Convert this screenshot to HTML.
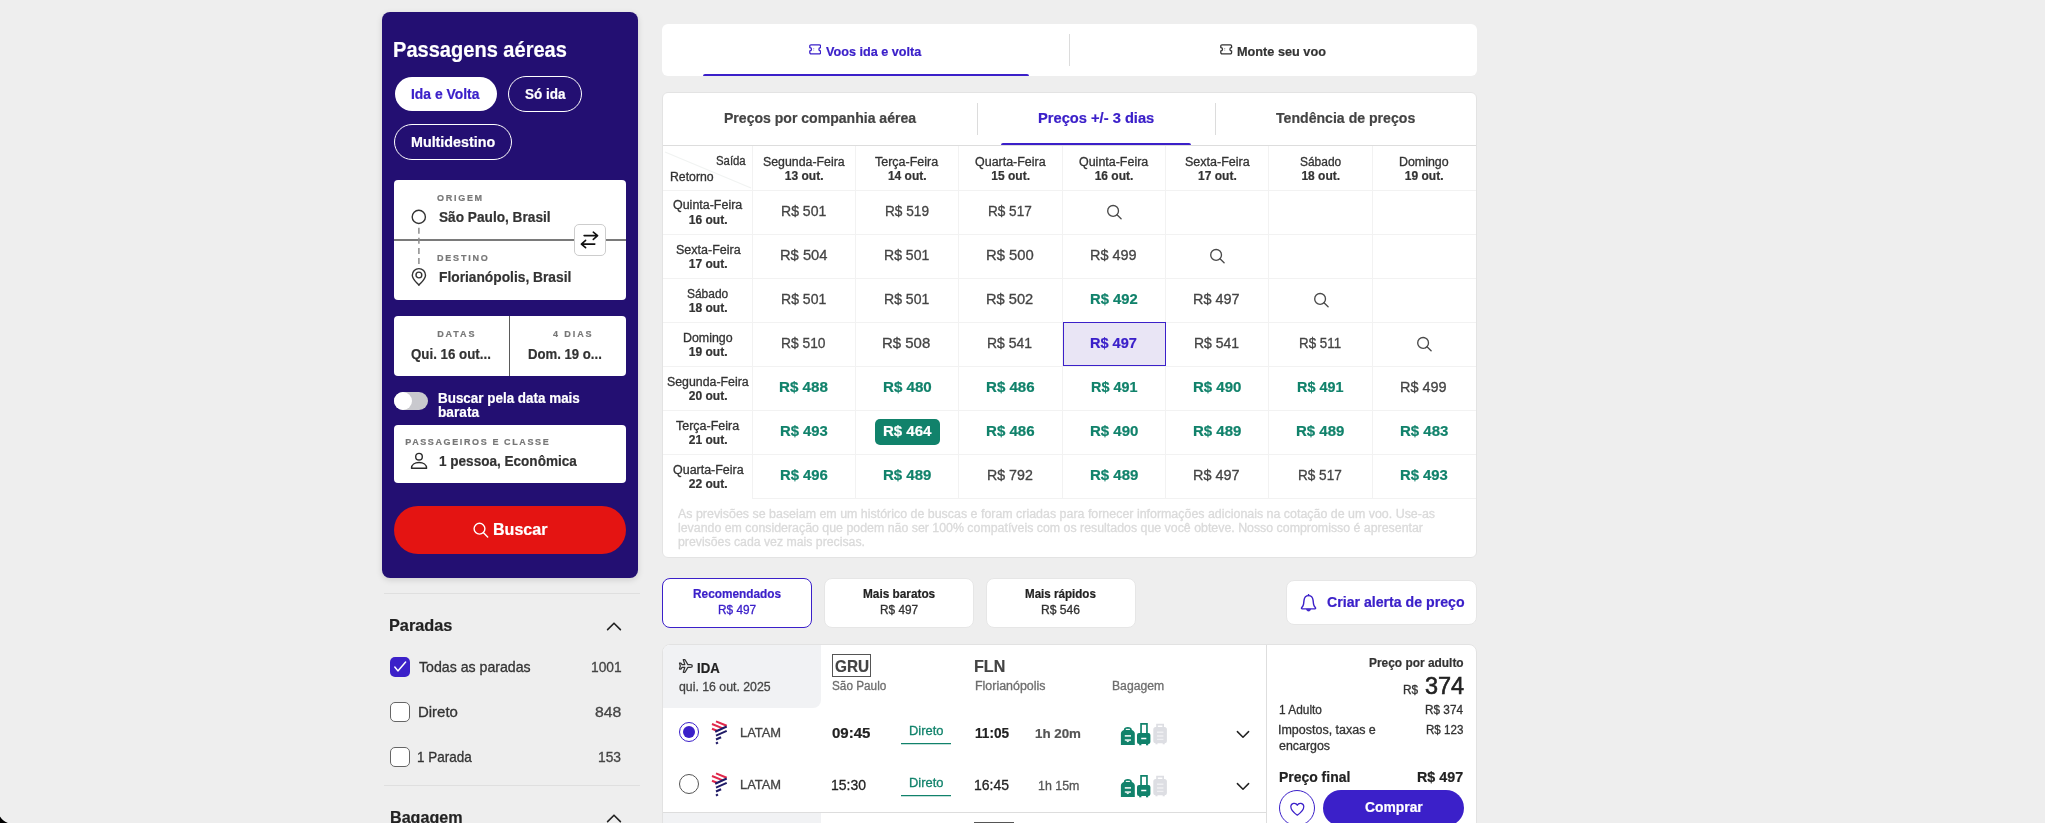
<!DOCTYPE html>
<html lang="pt-BR"><head><meta charset="utf-8"><title>Passagens aéreas</title>
<style>
*{box-sizing:border-box;margin:0;padding:0}
html,body{width:2045px;height:823px;overflow:hidden;background:#eeeeee;font-family:"Liberation Sans",sans-serif}
body{position:relative}
div,span,svg{position:absolute}
body>div{will-change:transform}
span{white-space:nowrap;line-height:1;display:block;transform-origin:0 0}
</style></head>
<body>
<div class="sidebar" style="left:0;top:0">
<div style="left:382px;top:12px;width:256px;height:566px;background:#230f72;border-radius:8px;box-shadow:0 2px 6px rgba(0,0,0,.13)"></div>
<span style="left:393.39px;top:39.40px;font-size:22px;font-weight:700;color:#ffffff;-webkit-text-stroke:0.2px;transform:scaleX(0.9115);">Passagens aéreas</span>
<div style="left:395px;top:77px;width:102px;height:34px;background:#fff;border-radius:17px"></div>
<span style="left:411.40px;top:87.00px;font-size:14px;font-weight:700;color:#3b20c9;-webkit-text-stroke:0.2px;transform:scaleX(0.9914);">Ida e Volta</span>
<div style="left:508px;top:76px;width:74px;height:36px;border:1px solid #fff;border-radius:18px"></div>
<span style="left:524.50px;top:87.00px;font-size:14px;font-weight:700;color:#ffffff;-webkit-text-stroke:0.2px;transform:scaleX(0.9640);">Só ida</span>
<div style="left:394px;top:124px;width:118px;height:36px;border:1px solid #fff;border-radius:18px"></div>
<span style="left:411.40px;top:135.00px;font-size:14px;font-weight:700;color:#ffffff;-webkit-text-stroke:0.2px;transform:scaleX(1.0210);">Multidestino</span>
<div style="left:394px;top:180px;width:232px;height:120px;background:#fff;border-radius:4px"></div>
<div style="left:394px;top:239px;width:232px;height:2px;background:#7a7a7a"></div>
<span style="left:437.00px;top:193.60px;font-size:9px;font-weight:700;color:#777777;-webkit-text-stroke:0.2px;letter-spacing:1.719px;">ORIGEM</span>
<span style="left:439.00px;top:209.60px;font-size:14px;font-weight:700;color:#333333;-webkit-text-stroke:0.2px;transform:scaleX(0.9755);">São Paulo, Brasil</span>
<span style="left:437.00px;top:253.60px;font-size:9px;font-weight:700;color:#777777;-webkit-text-stroke:0.2px;letter-spacing:1.800px;">DESTINO</span>
<span style="left:439.00px;top:270.00px;font-size:14px;font-weight:700;color:#333333;-webkit-text-stroke:0.2px;transform:scaleX(0.9829);">Florianópolis, Brasil</span>
<svg style="left:409px;top:207px" width="20" height="82" viewBox="0 0 20 82" ><circle cx="9.8" cy="9.9" r="6.6" fill="#fff" stroke="#333" stroke-width="1.4"/><path d="M9.9 20.7V57" stroke="#8c8c8c" stroke-width="1.5" stroke-dasharray="6 4.1" fill="none"/><path d="M9.9 78.2c-2.2-2.6-6.6-6-6.6-10a6.6 6.6 0 0 1 13.2 0c0 4-4.4 7.4-6.6 10z" fill="#fff" stroke="#333" stroke-width="1.4" stroke-linejoin="round"/><circle cx="9.9" cy="68" r="2.9" fill="none" stroke="#333" stroke-width="1.4"/></svg>
<div style="left:574px;top:224px;width:32px;height:32px;background:#fff;border:1px solid #cdcdcd;border-radius:5px"></div>
<svg style="left:579px;top:229px" width="22" height="22" viewBox="0 0 22 22" ><path d="M5.1 6.600H18.400M14.300 3.200L18.600 6.600 14.300 10.400M15.800 15.100H2.700M6.600 11.400L2.400 15.100 6.600 18.700" fill="none" stroke="#111" stroke-width="1.6" stroke-linecap="round" stroke-linejoin="round"/></svg>
<div style="left:394px;top:316px;width:232px;height:60px;background:#fff;border-radius:4px"></div>
<div style="left:509px;top:316px;width:1px;height:60px;background:#5a5a5a"></div>
<span style="left:437.20px;top:329.60px;font-size:9px;font-weight:700;color:#777777;-webkit-text-stroke:0.2px;letter-spacing:1.885px;">DATAS</span>
<span style="left:411.40px;top:346.80px;font-size:14px;font-weight:700;color:#333333;-webkit-text-stroke:0.2px;transform:scaleX(0.9505);">Qui. 16 out...</span>
<span style="left:553.00px;top:329.60px;font-size:9px;font-weight:700;color:#777777;-webkit-text-stroke:0.2px;letter-spacing:1.919px;">4 DIAS</span>
<span style="left:527.60px;top:346.80px;font-size:14px;font-weight:700;color:#333333;-webkit-text-stroke:0.2px;transform:scaleX(0.9397);">Dom. 19 o...</span>
<div style="left:394px;top:392px;width:34px;height:18px;background:#c9c9ce;border-radius:9px"></div>
<div style="left:394px;top:392px;width:18px;height:18px;background:#fff;border-radius:9px"></div>
<span style="left:438.40px;top:390.80px;font-size:14px;font-weight:700;color:#ffffff;-webkit-text-stroke:0.2px;transform:scaleX(0.9591);">Buscar pela data mais</span>
<span style="left:438.40px;top:404.70px;font-size:14px;font-weight:700;color:#ffffff;-webkit-text-stroke:0.2px;transform:scaleX(0.9779);">barata</span>
<div style="left:394px;top:425px;width:232px;height:58px;background:#fff;border-radius:4px"></div>
<span style="left:405.20px;top:437.80px;font-size:9px;font-weight:700;color:#777777;-webkit-text-stroke:0.2px;letter-spacing:1.613px;">PASSAGEIROS E CLASSE</span>
<svg style="left:410px;top:452px" width="19" height="18" viewBox="0 0 19 18" ><circle cx="9" cy="4.7" r="3.3" fill="none" stroke="#2a2a2a" stroke-width="1.4"/><path d="M1.5 16.3C1.5 12.6 4.8 10.5 9.05 10.5S16.6 12.6 16.6 16.300z" fill="none" stroke="#2a2a2a" stroke-width="1.4" stroke-linejoin="round"/></svg>
<span style="left:439.30px;top:453.80px;font-size:14px;font-weight:700;color:#333333;-webkit-text-stroke:0.2px;transform:scaleX(0.9677);">1 pessoa, Econômica</span>
<div style="left:394px;top:506px;width:232px;height:48px;background:#e41412;border-radius:24px"></div>
<svg style="left:472px;top:521px" width="18" height="18" viewBox="0 0 18 18" ><circle cx="7.5" cy="7.7" r="5.4" fill="none" stroke="#fff" stroke-width="1.4"/><path d="M11.5 11.7l4.2 4.2" stroke="#fff" stroke-width="1.4" stroke-linecap="round"/></svg>
<span style="left:492.60px;top:521.60px;font-size:16px;font-weight:700;color:#ffffff;-webkit-text-stroke:0.2px;transform:scaleX(1.0033);">Buscar</span>
</div>
<div class="filters" style="left:0;top:0">
<div style="left:384px;top:593px;width:256px;height:1px;background:#dfdfdf"></div>
<span style="left:389.34px;top:617.00px;font-size:17px;font-weight:700;color:#222;-webkit-text-stroke:0.2px;transform:scaleX(0.9582);">Paradas</span>
<svg style="left:606px;top:620px" width="16" height="12" viewBox="0 0 16 12" ><path d="M1.6 9.6L8 3.2l6.4 6.4" fill="none" stroke="#222" stroke-width="1.6" stroke-linecap="round" stroke-linejoin="round"/></svg>
<div style="left:390px;top:657px;width:20px;height:20px;background:#3b20c9;border-radius:5px"></div>
<svg style="left:390px;top:657px" width="20" height="20" viewBox="0 0 20 20" ><path d="M4.8 10L7.9 13.9 15.6 5.100" fill="none" stroke="#fff" stroke-width="1.5" stroke-linecap="round" stroke-linejoin="round"/></svg>
<span style="left:418.60px;top:659.90px;font-size:14.5px;font-weight:400;color:#333333;-webkit-text-stroke:0.3px;transform:scaleX(0.9754);">Todas as paradas</span>
<span style="left:591.05px;top:659.90px;font-size:14.5px;font-weight:400;color:#444;-webkit-text-stroke:0.3px;transform:scaleX(0.9489);">1001</span>
<div style="left:390px;top:702px;width:20px;height:20px;background:#fff;border:1px solid #666;border-radius:5px"></div>
<span style="left:417.57px;top:705.00px;font-size:14.5px;font-weight:400;color:#333333;-webkit-text-stroke:0.3px;transform:scaleX(1.0315);">Direto</span>
<span style="left:595.40px;top:705.00px;font-size:14.5px;font-weight:400;color:#444;-webkit-text-stroke:0.3px;transform:scaleX(1.0859);">848</span>
<div style="left:390px;top:747px;width:20px;height:20px;background:#fff;border:1px solid #666;border-radius:5px"></div>
<span style="left:417.17px;top:749.70px;font-size:14.5px;font-weight:400;color:#333333;-webkit-text-stroke:0.3px;transform:scaleX(0.9288);">1 Parada</span>
<span style="left:598.25px;top:749.70px;font-size:14.5px;font-weight:400;color:#444;-webkit-text-stroke:0.3px;transform:scaleX(0.9512);">153</span>
<div style="left:384px;top:785px;width:256px;height:1px;background:#dfdfdf"></div>
<span style="left:389.55px;top:809.30px;font-size:17px;font-weight:700;color:#222;-webkit-text-stroke:0.2px;transform:scaleX(0.9482);">Bagagem</span>
<svg style="left:606px;top:812px" width="16" height="12" viewBox="0 0 16 12" ><path d="M1.6 9.6L8 3.2l6.4 6.4" fill="none" stroke="#222" stroke-width="1.6" stroke-linecap="round" stroke-linejoin="round"/></svg>
</div>
<div class="tabs" style="left:0;top:0">
<div style="left:662px;top:24px;width:815px;height:52px;background:#fff;border-radius:6px"></div>
<div style="left:1069px;top:34px;width:1px;height:32px;background:#dcdcdc"></div>
<div style="left:703px;top:74px;width:326px;height:2px;background:#3b20c9;border-radius:2px 2px 0 0"></div>
<svg style="left:809px;top:44.3px" width="12.4" height="10.6" viewBox="0 0 12.4 10.6" ><path d="M2 .8H10.4a1.2 1.2 0 0 1 1.2 1.2V3.6a1.7 1.7 0 0 0 0 3.4V8.6a1.2 1.2 0 0 1-1.2 1.2H2A1.2 1.2 0 0 1 .8 8.6V7a1.7 1.7 0 0 0 0-3.4V2A1.2 1.2 0 0 1 2 .8z" fill="none" stroke="#3b20c9" stroke-width="1.3" stroke-linejoin="round"/><path d="M4.7 4.2v.8M4.7 5.7v.8" stroke="#3b20c9" stroke-width="1" opacity=".55"/></svg>
<span style="left:826.00px;top:44.80px;font-size:13px;font-weight:700;color:#3b20c9;-webkit-text-stroke:0.2px;transform:scaleX(0.9719);">Voos ida e volta</span>
<svg style="left:1220.2px;top:44.3px" width="12.4" height="10.6" viewBox="0 0 12.4 10.6" ><path d="M2 .8H10.4a1.2 1.2 0 0 1 1.2 1.2V3.6a1.7 1.7 0 0 0 0 3.4V8.6a1.2 1.2 0 0 1-1.2 1.2H2A1.2 1.2 0 0 1 .8 8.6V7a1.7 1.7 0 0 0 0-3.4V2A1.2 1.2 0 0 1 2 .8z" fill="none" stroke="#333" stroke-width="1.3" stroke-linejoin="round"/><path d="M4.7 4.2v.8M4.7 5.7v.8" stroke="#333" stroke-width="1" opacity=".55"/></svg>
<span style="left:1237.30px;top:44.80px;font-size:13px;font-weight:700;color:#333;-webkit-text-stroke:0.2px;transform:scaleX(0.9773);">Monte seu voo</span>
</div>
<div class="matrix" style="left:0;top:0">
<div style="left:662px;top:92px;width:815px;height:466px;background:#fff;border:1px solid #e3e3e3;border-radius:6px"></div>
<div style="left:977px;top:103px;width:1px;height:32px;background:#dcdcdc"></div>
<div style="left:1215px;top:103px;width:1px;height:32px;background:#dcdcdc"></div>
<span style="left:723.50px;top:111.00px;font-size:14.5px;font-weight:700;color:#444;-webkit-text-stroke:0.2px;transform:scaleX(0.9689);">Preços por companhia aérea</span>
<span style="left:1038.20px;top:111.00px;font-size:14.5px;font-weight:700;color:#3b20c9;-webkit-text-stroke:0.2px;transform:scaleX(1.0123);">Preços +/- 3 dias</span>
<span style="left:1276.00px;top:111.00px;font-size:14.5px;font-weight:700;color:#444;-webkit-text-stroke:0.2px;transform:scaleX(0.9727);">Tendência de preços</span>
<div style="left:1001px;top:143px;width:190px;height:2px;background:#3b20c9;border-radius:2px 2px 0 0"></div>
<div style="left:663px;top:145px;width:813px;height:1px;background:#dddddd"></div>
<div style="left:752px;top:146px;width:1px;height:352px;background:#f2f2f2"></div>
<div style="left:855px;top:146px;width:1px;height:352px;background:#f2f2f2"></div>
<div style="left:958px;top:146px;width:1px;height:352px;background:#f2f2f2"></div>
<div style="left:1062px;top:146px;width:1px;height:352px;background:#f2f2f2"></div>
<div style="left:1165px;top:146px;width:1px;height:352px;background:#f2f2f2"></div>
<div style="left:1268px;top:146px;width:1px;height:352px;background:#f2f2f2"></div>
<div style="left:1372px;top:146px;width:1px;height:352px;background:#f2f2f2"></div>
<div style="left:663px;top:190px;width:813px;height:1px;background:#f2f2f2"></div>
<div style="left:663px;top:234px;width:813px;height:1px;background:#f2f2f2"></div>
<div style="left:663px;top:278px;width:813px;height:1px;background:#f2f2f2"></div>
<div style="left:663px;top:322px;width:813px;height:1px;background:#f2f2f2"></div>
<div style="left:663px;top:366px;width:813px;height:1px;background:#f2f2f2"></div>
<div style="left:663px;top:410px;width:813px;height:1px;background:#f2f2f2"></div>
<div style="left:663px;top:454px;width:813px;height:1px;background:#f2f2f2"></div>
<div style="left:752px;top:498px;width:724px;height:1px;background:#f2f2f2"></div>
<svg style="left:663px;top:146px" width="89" height="44" viewBox="0 0 89 44" ><path d="M2 6L88 42" stroke="#f1f3f2" stroke-width="1.3"/></svg>
<span style="left:716.20px;top:154.80px;font-size:12px;font-weight:400;color:#333333;-webkit-text-stroke:0.3px;transform:scaleX(0.9468);">Saída</span>
<span style="left:670.00px;top:170.80px;font-size:12px;font-weight:400;color:#333333;-webkit-text-stroke:0.3px;transform:scaleX(1.0228);">Retorno</span>
<span style="left:763.00px;top:155.50px;font-size:12px;font-weight:400;color:#333333;-webkit-text-stroke:0.3px;transform:scaleX(1.0287);">Segunda-Feira</span>
<span style="left:784.80px;top:170.00px;font-size:12px;font-weight:700;color:#333333;-webkit-text-stroke:0.2px;">13 out.</span>
<span style="left:875.40px;top:155.50px;font-size:12px;font-weight:400;color:#333333;-webkit-text-stroke:0.3px;transform:scaleX(1.0409);">Terça-Feira</span>
<span style="left:887.95px;top:170.00px;font-size:12px;font-weight:700;color:#333333;-webkit-text-stroke:0.2px;">14 out.</span>
<span style="left:975.00px;top:155.50px;font-size:12px;font-weight:400;color:#333333;-webkit-text-stroke:0.3px;transform:scaleX(1.0388);">Quarta-Feira</span>
<span style="left:991.30px;top:170.00px;font-size:12px;font-weight:700;color:#333333;-webkit-text-stroke:0.2px;">15 out.</span>
<span style="left:1079.10px;top:155.50px;font-size:12px;font-weight:400;color:#333333;-webkit-text-stroke:0.3px;transform:scaleX(1.0385);">Quinta-Feira</span>
<span style="left:1094.70px;top:170.00px;font-size:12px;font-weight:700;color:#333333;-webkit-text-stroke:0.2px;">16 out.</span>
<span style="left:1184.75px;top:155.50px;font-size:12px;font-weight:400;color:#333333;-webkit-text-stroke:0.3px;transform:scaleX(1.0425);">Sexta-Feira</span>
<span style="left:1198.05px;top:170.00px;font-size:12px;font-weight:700;color:#333333;-webkit-text-stroke:0.2px;">17 out.</span>
<span style="left:1299.85px;top:155.50px;font-size:12px;font-weight:400;color:#333333;-webkit-text-stroke:0.3px;transform:scaleX(0.9952);">Sábado</span>
<span style="left:1301.40px;top:170.00px;font-size:12px;font-weight:700;color:#333333;-webkit-text-stroke:0.2px;">18 out.</span>
<span style="left:1399.00px;top:155.50px;font-size:12px;font-weight:400;color:#333333;-webkit-text-stroke:0.3px;transform:scaleX(1.0341);">Domingo</span>
<span style="left:1404.80px;top:170.00px;font-size:12px;font-weight:700;color:#333333;-webkit-text-stroke:0.2px;">19 out.</span>
<span style="left:673.20px;top:199.40px;font-size:12px;font-weight:400;color:#333333;-webkit-text-stroke:0.3px;transform:scaleX(1.0385);">Quinta-Feira</span>
<span style="left:688.80px;top:213.70px;font-size:12px;font-weight:700;color:#333333;-webkit-text-stroke:0.2px;">16 out.</span>
<span style="left:780.75px;top:203.70px;font-size:14px;font-weight:400;color:#444;-webkit-text-stroke:0.3px;transform:scaleX(1.0032);">R$ 501</span>
<span style="left:884.58px;top:203.70px;font-size:14px;font-weight:400;color:#444;-webkit-text-stroke:0.3px;transform:scaleX(0.9739);">R$ 519</span>
<span style="left:988.03px;top:203.70px;font-size:14px;font-weight:400;color:#444;-webkit-text-stroke:0.3px;transform:scaleX(0.9694);">R$ 517</span>
<svg style="left:1105.9px;top:203.8px" width="17" height="17" viewBox="0 0 17 17" ><circle cx="7.1" cy="6.9" r="5.4" fill="none" stroke="#4a4a4a" stroke-width="1.35"/><path d="M11 10.8l4.1 3.900" stroke="#4a4a4a" stroke-width="1.35" stroke-linecap="round"/></svg>
<span style="left:675.50px;top:243.60px;font-size:12px;font-weight:400;color:#333333;-webkit-text-stroke:0.3px;transform:scaleX(1.0425);">Sexta-Feira</span>
<span style="left:688.80px;top:257.90px;font-size:12px;font-weight:700;color:#333333;-webkit-text-stroke:0.2px;">17 out.</span>
<span style="left:779.65px;top:247.90px;font-size:14px;font-weight:400;color:#444;-webkit-text-stroke:0.3px;transform:scaleX(1.0505);">R$ 504</span>
<span style="left:883.90px;top:247.90px;font-size:14px;font-weight:400;color:#444;-webkit-text-stroke:0.3px;transform:scaleX(1.0032);">R$ 501</span>
<span style="left:985.99px;top:247.90px;font-size:14px;font-weight:400;color:#444;-webkit-text-stroke:0.3px;transform:scaleX(1.0573);">R$ 500</span>
<span style="left:1090.02px;top:247.90px;font-size:14px;font-weight:400;color:#444;-webkit-text-stroke:0.3px;transform:scaleX(1.0302);">R$ 499</span>
<svg style="left:1209.2px;top:248px" width="17" height="17" viewBox="0 0 17 17" ><circle cx="7.1" cy="6.9" r="5.4" fill="none" stroke="#4a4a4a" stroke-width="1.35"/><path d="M11 10.8l4.1 3.900" stroke="#4a4a4a" stroke-width="1.35" stroke-linecap="round"/></svg>
<span style="left:687.25px;top:287.70px;font-size:12px;font-weight:400;color:#333333;-webkit-text-stroke:0.3px;transform:scaleX(0.9952);">Sábado</span>
<span style="left:688.80px;top:302.00px;font-size:12px;font-weight:700;color:#333333;-webkit-text-stroke:0.2px;">18 out.</span>
<span style="left:780.75px;top:292.00px;font-size:14px;font-weight:400;color:#444;-webkit-text-stroke:0.3px;transform:scaleX(1.0032);">R$ 501</span>
<span style="left:883.90px;top:292.00px;font-size:14px;font-weight:400;color:#444;-webkit-text-stroke:0.3px;transform:scaleX(1.0032);">R$ 501</span>
<span style="left:986.25px;top:292.00px;font-size:14px;font-weight:400;color:#444;-webkit-text-stroke:0.3px;transform:scaleX(1.0460);">R$ 502</span>
<span style="left:1089.95px;top:292.00px;font-size:14px;font-weight:700;color:#11826b;-webkit-text-stroke:0.2px;transform:scaleX(1.0560);">R$ 492</span>
<span style="left:1193.37px;top:292.00px;font-size:14px;font-weight:400;color:#444;-webkit-text-stroke:0.3px;transform:scaleX(1.0302);">R$ 497</span>
<svg style="left:1312.6px;top:292.1px" width="17" height="17" viewBox="0 0 17 17" ><circle cx="7.1" cy="6.9" r="5.4" fill="none" stroke="#4a4a4a" stroke-width="1.35"/><path d="M11 10.8l4.1 3.900" stroke="#4a4a4a" stroke-width="1.35" stroke-linecap="round"/></svg>
<span style="left:683.00px;top:331.80px;font-size:12px;font-weight:400;color:#333333;-webkit-text-stroke:0.3px;transform:scaleX(1.0341);">Domingo</span>
<span style="left:688.80px;top:346.10px;font-size:12px;font-weight:700;color:#333333;-webkit-text-stroke:0.2px;">19 out.</span>
<span style="left:781.16px;top:336.10px;font-size:14px;font-weight:400;color:#444;-webkit-text-stroke:0.3px;transform:scaleX(0.9852);">R$ 510</span>
<span style="left:882.38px;top:336.10px;font-size:14px;font-weight:400;color:#444;-webkit-text-stroke:0.3px;transform:scaleX(1.0686);">R$ 508</span>
<span style="left:987.40px;top:336.10px;font-size:14px;font-weight:400;color:#444;-webkit-text-stroke:0.3px;transform:scaleX(0.9964);">R$ 541</span>
<div style="left:1063px;top:322px;width:103px;height:44px;background:#e9e5f5;border:1px solid #3b20c9"></div>
<span style="left:1090.35px;top:336.10px;font-size:14px;font-weight:700;color:#3b20c9;-webkit-text-stroke:0.2px;transform:scaleX(1.0384);">R$ 497</span>
<span style="left:1194.15px;top:336.10px;font-size:14px;font-weight:400;color:#444;-webkit-text-stroke:0.3px;transform:scaleX(0.9964);">R$ 541</span>
<span style="left:1299.00px;top:336.10px;font-size:14px;font-weight:400;color:#444;-webkit-text-stroke:0.3px;transform:scaleX(0.9534);">R$ 511</span>
<svg style="left:1416.0px;top:336.2px" width="17" height="17" viewBox="0 0 17 17" ><circle cx="7.1" cy="6.9" r="5.4" fill="none" stroke="#4a4a4a" stroke-width="1.35"/><path d="M11 10.8l4.1 3.900" stroke="#4a4a4a" stroke-width="1.35" stroke-linecap="round"/></svg>
<span style="left:667.00px;top:375.70px;font-size:12px;font-weight:400;color:#333333;-webkit-text-stroke:0.3px;transform:scaleX(1.0287);">Segunda-Feira</span>
<span style="left:688.80px;top:390.00px;font-size:12px;font-weight:700;color:#333333;-webkit-text-stroke:0.2px;">20 out.</span>
<span style="left:779.45px;top:380.00px;font-size:14px;font-weight:700;color:#11826b;-webkit-text-stroke:0.2px;transform:scaleX(1.0825);">R$ 488</span>
<span style="left:882.65px;top:380.00px;font-size:14px;font-weight:700;color:#11826b;-webkit-text-stroke:0.2px;transform:scaleX(1.0803);">R$ 480</span>
<span style="left:986.10px;top:380.00px;font-size:14px;font-weight:700;color:#11826b;-webkit-text-stroke:0.2px;transform:scaleX(1.0759);">R$ 486</span>
<span style="left:1090.60px;top:380.00px;font-size:14px;font-weight:700;color:#11826b;-webkit-text-stroke:0.2px;transform:scaleX(1.0274);">R$ 491</span>
<span style="left:1192.95px;top:380.00px;font-size:14px;font-weight:700;color:#11826b;-webkit-text-stroke:0.2px;transform:scaleX(1.0715);">R$ 490</span>
<span style="left:1297.30px;top:380.00px;font-size:14px;font-weight:700;color:#11826b;-webkit-text-stroke:0.2px;transform:scaleX(1.0274);">R$ 491</span>
<span style="left:1400.12px;top:380.00px;font-size:14px;font-weight:400;color:#444;-webkit-text-stroke:0.3px;transform:scaleX(1.0302);">R$ 499</span>
<span style="left:676.25px;top:419.80px;font-size:12px;font-weight:400;color:#333333;-webkit-text-stroke:0.3px;transform:scaleX(1.0409);">Terça-Feira</span>
<span style="left:688.80px;top:434.10px;font-size:12px;font-weight:700;color:#333333;-webkit-text-stroke:0.2px;">21 out.</span>
<span style="left:779.95px;top:424.10px;font-size:14px;font-weight:700;color:#11826b;-webkit-text-stroke:0.2px;transform:scaleX(1.0604);">R$ 493</span>
<div style="left:875px;top:419px;width:65px;height:26px;background:#11826b;border-radius:5px"></div>
<span style="left:882.85px;top:424.10px;font-size:14px;font-weight:700;color:#ffffff;-webkit-text-stroke:0.2px;transform:scaleX(1.0715);">R$ 464</span>
<span style="left:986.10px;top:424.10px;font-size:14px;font-weight:700;color:#11826b;-webkit-text-stroke:0.2px;transform:scaleX(1.0759);">R$ 486</span>
<span style="left:1089.60px;top:424.10px;font-size:14px;font-weight:700;color:#11826b;-webkit-text-stroke:0.2px;transform:scaleX(1.0715);">R$ 490</span>
<span style="left:1192.95px;top:424.10px;font-size:14px;font-weight:700;color:#11826b;-webkit-text-stroke:0.2px;transform:scaleX(1.0715);">R$ 489</span>
<span style="left:1296.30px;top:424.10px;font-size:14px;font-weight:700;color:#11826b;-webkit-text-stroke:0.2px;transform:scaleX(1.0715);">R$ 489</span>
<span style="left:1399.70px;top:424.10px;font-size:14px;font-weight:700;color:#11826b;-webkit-text-stroke:0.2px;transform:scaleX(1.0715);">R$ 483</span>
<span style="left:672.50px;top:464.00px;font-size:12px;font-weight:400;color:#333333;-webkit-text-stroke:0.3px;transform:scaleX(1.0388);">Quarta-Feira</span>
<span style="left:688.80px;top:478.30px;font-size:12px;font-weight:700;color:#333333;-webkit-text-stroke:0.2px;">22 out.</span>
<span style="left:779.95px;top:468.30px;font-size:14px;font-weight:700;color:#11826b;-webkit-text-stroke:0.2px;transform:scaleX(1.0604);">R$ 496</span>
<span style="left:882.85px;top:468.30px;font-size:14px;font-weight:700;color:#11826b;-webkit-text-stroke:0.2px;transform:scaleX(1.0715);">R$ 489</span>
<span style="left:986.99px;top:468.30px;font-size:14px;font-weight:400;color:#444;-webkit-text-stroke:0.3px;transform:scaleX(1.0145);">R$ 792</span>
<span style="left:1089.60px;top:468.30px;font-size:14px;font-weight:700;color:#11826b;-webkit-text-stroke:0.2px;transform:scaleX(1.0715);">R$ 489</span>
<span style="left:1193.37px;top:468.30px;font-size:14px;font-weight:400;color:#444;-webkit-text-stroke:0.3px;transform:scaleX(1.0302);">R$ 497</span>
<span style="left:1298.13px;top:468.30px;font-size:14px;font-weight:400;color:#444;-webkit-text-stroke:0.3px;transform:scaleX(0.9694);">R$ 517</span>
<span style="left:1399.95px;top:468.30px;font-size:14px;font-weight:700;color:#11826b;-webkit-text-stroke:0.2px;transform:scaleX(1.0604);">R$ 493</span>
<span style="left:678.00px;top:507.90px;font-size:12px;font-weight:400;color:#dadada;-webkit-text-stroke:0.3px;transform:scaleX(1.0346);">As previsões se baseiam em um histórico de buscas e foram criadas para fornecer informações adicionais na cotação de um voo. Use-as</span>
<span style="left:678.00px;top:522.10px;font-size:12px;font-weight:400;color:#dadada;-webkit-text-stroke:0.3px;transform:scaleX(1.0303);">levando em consideração que podem não ser 100% compatíveis com os resultados que você obteve. Nosso compromisso é apresentar</span>
<span style="left:678.00px;top:536.10px;font-size:12px;font-weight:400;color:#dadada;-webkit-text-stroke:0.3px;transform:scaleX(1.0230);">previsões cada vez mais precisas.</span>
</div>
<div class="sort" style="left:0;top:0">
<div style="left:662px;top:578px;width:150px;height:50px;background:#fff;border:1px solid #3b20c9;border-radius:8px"></div>
<span style="left:692.75px;top:588.00px;font-size:12px;font-weight:700;color:#3b20c9;-webkit-text-stroke:0.2px;transform:scaleX(0.9868);">Recomendados</span>
<span style="left:717.80px;top:604.20px;font-size:12px;font-weight:400;color:#3b20c9;-webkit-text-stroke:0.3px;transform:scaleX(0.9841);">R$ 497</span>
<div style="left:824px;top:578px;width:150px;height:50px;background:#fff;border:1px solid #e6e6e6;border-radius:8px"></div>
<span style="left:862.55px;top:588.00px;font-size:12px;font-weight:700;color:#222;-webkit-text-stroke:0.2px;transform:scaleX(0.9839);">Mais baratos</span>
<span style="left:879.60px;top:604.20px;font-size:12px;font-weight:400;color:#333;-webkit-text-stroke:0.3px;transform:scaleX(0.9841);">R$ 497</span>
<div style="left:986px;top:578px;width:150px;height:50px;background:#fff;border:1px solid #e6e6e6;border-radius:8px"></div>
<span style="left:1025.20px;top:588.00px;font-size:12px;font-weight:700;color:#222;-webkit-text-stroke:0.2px;transform:scaleX(0.9663);">Mais rápidos</span>
<span style="left:1041.10px;top:604.20px;font-size:12px;font-weight:400;color:#333;-webkit-text-stroke:0.3px;transform:scaleX(1.0097);">R$ 546</span>
<div style="left:1286px;top:580px;width:191px;height:45px;background:#fff;border:1px solid #e6e6e6;border-radius:8px"></div>
<svg style="left:1299px;top:594px" width="19" height="19" viewBox="0 0 19 19" ><path d="M9.55 1.6c-2.6 0-4.2 2-4.5 4.6l-.5 4c-.2 1.6-1 2.6-1.9 3.6-.4.5-.1 1.1.5 1.1h12.8c.6 0 .9-.6.5-1.1-.9-1-1.7-2-1.9-3.6l-.5-4c-.3-2.6-1.9-4.6-4.5-4.600z" fill="none" stroke="#3b20c9" stroke-width="1.4" stroke-linejoin="round"/><path d="M9.55.5v1.1" stroke="#3b20c9" stroke-width="1.4" stroke-linecap="round"/><path d="M7.5 15.4a2.1 2.1 0 0 0 4.1 0z" fill="#3b20c9" stroke="#3b20c9" stroke-width=".8"/></svg>
<span style="left:1326.70px;top:595.00px;font-size:14px;font-weight:700;color:#3b20c9;-webkit-text-stroke:0.2px;transform:scaleX(1.0102);">Criar alerta de preço</span>
</div>
<div class="flight" style="left:0;top:0">
<div style="left:662px;top:644px;width:815px;height:200px;background:#fff;border:1px solid #e2e2e2;border-radius:8px"></div>
<div style="left:663px;top:645px;width:158px;height:63px;background:#f1f2f4;border-radius:7px 0 8px 0"></div>
<svg style="left:678px;top:658px" width="16" height="16" viewBox="0 0 16 16" ><path d="M14.3 8c0 .8-.7 1.4-1.7 1.4H9.9L7 14.3H5.3l1.5-4.9H4.1L2.9 11H1.5l.8-3-.8-3h1.4l1.2 1.6h2.7L5.3 1.7H7l2.9 4.9h2.7c1 0 1.7.6 1.7 1.4z" fill="none" stroke="#333" stroke-width="1.25" stroke-linejoin="round"/></svg>
<span style="left:697.30px;top:661.20px;font-size:14px;font-weight:700;color:#222;-webkit-text-stroke:0.2px;transform:scaleX(0.9458);">IDA</span>
<span style="left:679.00px;top:680.40px;font-size:13px;font-weight:400;color:#444;-webkit-text-stroke:0.3px;transform:scaleX(0.9459);">qui. 16 out. 2025</span>
<div style="left:832px;top:654px;width:39px;height:23px;border:1px solid #555"></div>
<span style="left:834.80px;top:658.00px;font-size:16.5px;font-weight:700;color:#444;-webkit-text-stroke:0.2px;transform:scaleX(0.9287);">GRU</span>
<span style="left:831.60px;top:680.00px;font-size:12px;font-weight:400;color:#6e6e6e;-webkit-text-stroke:0.3px;transform:scaleX(0.9802);">São Paulo</span>
<span style="left:973.73px;top:658.00px;font-size:16.5px;font-weight:700;color:#444;-webkit-text-stroke:0.2px;transform:scaleX(0.9749);">FLN</span>
<span style="left:974.70px;top:680.00px;font-size:12px;font-weight:400;color:#6e6e6e;-webkit-text-stroke:0.3px;transform:scaleX(1.0363);">Florianópolis</span>
<span style="left:1111.70px;top:680.00px;font-size:12px;font-weight:400;color:#6e6e6e;-webkit-text-stroke:0.3px;transform:scaleX(1.0142);">Bagagem</span>
<div style="left:679px;top:722px;width:20px;height:20px;background:#fff;border:1px solid #3b20c9;border-radius:50%"></div>
<div style="left:683px;top:726px;width:12px;height:12px;background:#3b20c9;border-radius:50%"></div>
<svg style="left:711px;top:720px" width="17" height="26" viewBox="0 0 17 26" ><g stroke-width="2.1" fill="none"><path d="M5 1.4L15.7 5.8M1 4l10.8 4.4M1 8.7l5 2" stroke="#e1284b"/><path d="M15.7 6.5L4.2 11.7M15.7 10.9L5 15.6M10.1 17.3L5 19.5M6.9 22.4L5 23.7" stroke="#1f1a66"/></g></svg>
<span style="left:739.71px;top:726.10px;font-size:13px;font-weight:400;color:#444;-webkit-text-stroke:0.3px;transform:scaleX(0.9929);">LATAM</span>
<span style="left:832.00px;top:725.80px;font-size:14.5px;font-weight:700;color:#222;-webkit-text-stroke:0.2px;transform:scaleX(1.0372);">09:45</span>
<span style="left:908.51px;top:723.60px;font-size:13px;font-weight:400;color:#11826b;-webkit-text-stroke:0.3px;transform:scaleX(0.9926);">Direto</span>
<svg style="left:901px;top:742px" width="50" height="3" viewBox="0 0 50 3" ><path d="M0 1.55h50" stroke="#11826b" stroke-width="1.3"/></svg>
<span style="left:974.70px;top:725.80px;font-size:14.5px;font-weight:700;color:#222;-webkit-text-stroke:0.2px;transform:scaleX(0.9387);">11:05</span>
<span style="left:1035.20px;top:726.80px;font-size:13px;font-weight:700;color:#555;-webkit-text-stroke:0.2px;transform:scaleX(1.0262);">1h 20m</span>
<svg style="left:1120px;top:722px" width="48" height="24" viewBox="0 0 48 24" ><path d="M.9 22.9V11.5c0-2 1.6-3 2.9-3.5.2-2 1.7-2.9 4.05-2.9s3.85.9 4.05 2.9c1.3.5 2.9 1.5 2.9 3.5v11.4z" fill="#11826b"/><path d="M5.8 7.4h4.1" stroke="#fff" stroke-width="1.1"/><path d="M4.8 13.9H11" stroke="#fff" stroke-width="1.5"/><path d="M4.8 18H11" stroke="#fff" stroke-width="1.3"/><path d="M5.6 18.5l2.2 1.7 2.2-1.7z" fill="#fff"/><rect x="17" y="11" width="13.4" height="11" rx="2" fill="#11826b"/><path d="M21.05 11.5V1.95H26.95V11.5" fill="none" stroke="#11826b" stroke-width="1.7"/><rect x="19.2" y="21.6" width="2.2" height="1.7" fill="#11826b"/><rect x="26" y="21.6" width="2.2" height="1.7" fill="#11826b"/><path d="M21.2 16.5h5.1" stroke="#fff" stroke-width="1.5"/><rect x="33.3" y="5" width="13.6" height="16.3" rx="2.5" fill="#dddee3"/><path d="M37 5.4V2.6h6.2v2.8" fill="none" stroke="#dddee3" stroke-width="1.6"/><rect x="35.5" y="21" width="2" height="1.3" fill="#dddee3"/><rect x="42.7" y="21" width="2" height="1.3" fill="#dddee3"/><path d="M37 10.2h6.4M37 14h6.4M37 17.4h6.4" stroke="#efeff2" stroke-width="1.4"/></svg>
<svg style="left:1236px;top:729.6px" width="14" height="9" viewBox="0 0 14 9" ><path d="M1.4 1.6L7 7.2l5.6-5.6" fill="none" stroke="#222" stroke-width="1.5" stroke-linecap="round" stroke-linejoin="round"/></svg>
<div style="left:679px;top:774px;width:20px;height:20px;background:#fff;border:1px solid #555;border-radius:50%"></div>
<svg style="left:711px;top:772px" width="17" height="26" viewBox="0 0 17 26" ><g stroke-width="2.1" fill="none"><path d="M5 1.4L15.7 5.8M1 4l10.8 4.4M1 8.7l5 2" stroke="#e1284b"/><path d="M15.7 6.5L4.2 11.7M15.7 10.9L5 15.6M10.1 17.3L5 19.5M6.9 22.4L5 23.7" stroke="#1f1a66"/></g></svg>
<span style="left:739.71px;top:778.10px;font-size:13px;font-weight:400;color:#444;-webkit-text-stroke:0.3px;transform:scaleX(0.9929);">LATAM</span>
<span style="left:831.04px;top:777.80px;font-size:14.5px;font-weight:400;color:#222;-webkit-text-stroke:0.3px;transform:scaleX(0.9625);">15:30</span>
<span style="left:908.51px;top:775.60px;font-size:13px;font-weight:400;color:#11826b;-webkit-text-stroke:0.3px;transform:scaleX(0.9926);">Direto</span>
<svg style="left:901px;top:794px" width="50" height="3" viewBox="0 0 50 3" ><path d="M0 1.55h50" stroke="#11826b" stroke-width="1.3"/></svg>
<span style="left:973.73px;top:777.80px;font-size:14.5px;font-weight:400;color:#222;-webkit-text-stroke:0.3px;transform:scaleX(0.9653);">16:45</span>
<span style="left:1038.00px;top:778.80px;font-size:13px;font-weight:400;color:#555;-webkit-text-stroke:0.3px;transform:scaleX(0.9546);">1h 15m</span>
<svg style="left:1120px;top:774px" width="48" height="24" viewBox="0 0 48 24" ><path d="M.9 22.9V11.5c0-2 1.6-3 2.9-3.5.2-2 1.7-2.9 4.05-2.9s3.85.9 4.05 2.9c1.3.5 2.9 1.5 2.9 3.5v11.4z" fill="#11826b"/><path d="M5.8 7.4h4.1" stroke="#fff" stroke-width="1.1"/><path d="M4.8 13.9H11" stroke="#fff" stroke-width="1.5"/><path d="M4.8 18H11" stroke="#fff" stroke-width="1.3"/><path d="M5.6 18.5l2.2 1.7 2.2-1.7z" fill="#fff"/><rect x="17" y="11" width="13.4" height="11" rx="2" fill="#11826b"/><path d="M21.05 11.5V1.95H26.95V11.5" fill="none" stroke="#11826b" stroke-width="1.7"/><rect x="19.2" y="21.6" width="2.2" height="1.7" fill="#11826b"/><rect x="26" y="21.6" width="2.2" height="1.7" fill="#11826b"/><path d="M21.2 16.5h5.1" stroke="#fff" stroke-width="1.5"/><rect x="33.3" y="5" width="13.6" height="16.3" rx="2.5" fill="#dddee3"/><path d="M37 5.4V2.6h6.2v2.8" fill="none" stroke="#dddee3" stroke-width="1.6"/><rect x="35.5" y="21" width="2" height="1.3" fill="#dddee3"/><rect x="42.7" y="21" width="2" height="1.3" fill="#dddee3"/><path d="M37 10.2h6.4M37 14h6.4M37 17.4h6.4" stroke="#efeff2" stroke-width="1.4"/></svg>
<svg style="left:1236px;top:781.6px" width="14" height="9" viewBox="0 0 14 9" ><path d="M1.4 1.6L7 7.2l5.6-5.6" fill="none" stroke="#222" stroke-width="1.5" stroke-linecap="round" stroke-linejoin="round"/></svg>
<div style="left:663px;top:812px;width:603px;height:1px;background:#dddddd"></div>
<div style="left:663px;top:813px;width:158px;height:20px;background:#f1f2f4"></div>
<div style="left:974px;top:822px;width:40px;height:1px;background:#555"></div>
<div style="left:1266px;top:645px;width:1px;height:190px;background:#dedede"></div>
<span style="left:1369.00px;top:657.40px;font-size:12px;font-weight:700;color:#333;-webkit-text-stroke:0.2px;transform:scaleX(0.9925);">Preço por adulto</span>
<span style="left:1403.20px;top:684.00px;font-size:12px;font-weight:400;color:#333;-webkit-text-stroke:0.3px;transform:scaleX(0.9894);">R$</span>
<span style="left:1424.50px;top:674.00px;font-size:24px;font-weight:400;color:#222;-webkit-text-stroke:0.3px;transform:scaleX(0.9774);-webkit-text-stroke:.6px;">374</span>
<span style="left:1279.40px;top:703.80px;font-size:12px;font-weight:400;color:#333;-webkit-text-stroke:0.3px;transform:scaleX(0.9896);">1 Adulto</span>
<span style="left:1425.00px;top:703.80px;font-size:12px;font-weight:400;color:#333;-webkit-text-stroke:0.3px;transform:scaleX(0.9815);">R$ 374</span>
<span style="left:1278.36px;top:723.70px;font-size:12px;font-weight:400;color:#333;-webkit-text-stroke:0.3px;transform:scaleX(1.0400);">Impostos, taxas e</span>
<span style="left:1279.40px;top:739.90px;font-size:12px;font-weight:400;color:#333;-webkit-text-stroke:0.3px;transform:scaleX(1.0331);">encargos</span>
<span style="left:1425.60px;top:723.70px;font-size:12px;font-weight:400;color:#333;-webkit-text-stroke:0.3px;transform:scaleX(0.9661);">R$ 123</span>
<span style="left:1279.40px;top:769.90px;font-size:14px;font-weight:700;color:#222;-webkit-text-stroke:0.2px;transform:scaleX(0.9959);">Preço final</span>
<span style="left:1417.00px;top:769.90px;font-size:14px;font-weight:700;color:#222;-webkit-text-stroke:0.2px;transform:scaleX(1.0208);">R$ 497</span>
<div style="left:1279px;top:790px;width:36px;height:36px;background:#fff;border:1px solid #3b20c9;border-radius:18px"></div>
<svg style="left:1289px;top:801px" width="17" height="16" viewBox="0 0 17 16" ><path d="M8.3 14.2C4.4 11.6 1.8 9 1.8 5.6a3.4 3.4 0 0 1 6.5-1.3 3.4 3.4 0 0 1 6.5 1.3c0 3.400-2.600 6-6.500 8.600z" fill="none" stroke="#3b20c9" stroke-width="1.25" stroke-linejoin="round"/></svg>
<div style="left:1323px;top:790px;width:141px;height:36px;background:#3b20c9;border-radius:18px"></div>
<span style="left:1364.60px;top:800.00px;font-size:14px;font-weight:700;color:#ffffff;-webkit-text-stroke:0.2px;transform:scaleX(0.9899);">Comprar</span>
</div>
<div class="corner" style="left:0;top:0">
<svg style="left:0px;top:812px" width="12" height="11" viewBox="0 0 12 11" ><path d="M0 3.3C1.4 6 4 9.200 9 11.300H0z" fill="#f6f6f6"/><path d="M0 4.500C1.700 7.200 4.200 9.600 7.900 11H0z" fill="#000"/></svg>
</div>
</body></html>
